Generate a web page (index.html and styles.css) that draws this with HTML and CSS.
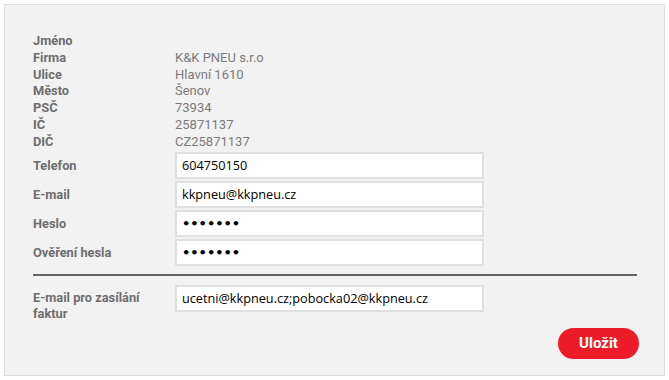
FILE: index.html
```html
<!DOCTYPE html>
<html lang="cs">
<head>
<meta charset="utf-8">
<link rel="stylesheet" href="styles.css">
</head>
<body>
<div class="panel">
  <div class="info">
    <div class="lbl">Jméno</div><div class="val"></div>
    <div class="lbl">Firma</div><div class="val">K&amp;K PNEU s.r.o</div>
    <div class="lbl">Ulice</div><div class="val">Hlavní 1610</div>
    <div class="lbl">Město</div><div class="val">Šenov</div>
    <div class="lbl">PSČ</div><div class="val">73934</div>
    <div class="lbl">IČ</div><div class="val">25871137</div>
    <div class="lbl">DIČ</div><div class="val">CZ25871137</div>
  </div>
  <div class="fields">
    <div class="lbl">Telefon</div><input class="inp" type="text" value="604750150">
    <div class="lbl">E-mail</div><input class="inp" type="text" value="kkpneu@kkpneu.cz">
    <div class="lbl">Heslo</div><input class="inp" type="password" value="1234567">
    <div class="lbl">Ověření hesla</div><input class="inp" type="password" value="1234567">
  </div>
  <hr class="sep">
  <div class="fields invoice">
    <div class="lbl lbl-top">E-mail pro zasílání faktur</div><input class="inp" type="text" value="ucetni@kkpneu.cz;pobocka02@kkpneu.cz">
  </div>
  <div class="actions">
    <button class="btn">Uložit</button>
  </div>
</div>
</body>
</html>
```
FILE: styles.css
```css
html, body {
  margin: 0;
  padding: 0;
  background: #fff;
}
body {
  font-family: Roboto, "Liberation Sans", Arial, sans-serif;
}
.panel {
  margin: 4px 0 0 4px;
  width: 661px;
  height: 372px;
  box-sizing: border-box;
  background: #f2f2f2;
  border: 1px solid #dedede;
  padding: 28px 27px 0 28px;
}
.info {
  display: grid;
  grid-template-columns: 142px 1fr;
  font-size: 13px;
  line-height: 16.8px;
}
.lbl {
  font-weight: 700;
  color: #6e6e6e;
  font-size: 12.8px;
}
.val {
  color: #7b7b7b;
  min-height: 16.8px;
}
.fields {
  display: grid;
  grid-template-columns: 142px 309px;
  row-gap: 2px;
  align-items: center;
  margin-top: 1px;
}
.inp {
  box-sizing: border-box;
  height: 27px;
  width: 309px;
  margin: 0;
  border: 2px solid #e0e0e0;
  background: #fff;
  padding: 0 5px;
  font-family: "Open Sans", "DejaVu Sans", sans-serif;
  font-size: 12.7px;
  color: #000;
  outline: none;
}
.inp[type="password"] {
  font-family: "DejaVu Sans", sans-serif;
  font-size: 13px;
  font-weight: 700;
}
.sep {
  margin: 8px 0 9px 0;
  border: 0;
  height: 2px;
  background: #666;
  width: 604px;
}
.invoice {
  margin-top: 0;
  align-items: start;
}
.lbl-top {
  line-height: 16px;
  padding-top: 5px;
  padding-right: 10px;
}
.actions {
  display: flex;
  justify-content: flex-end;
  margin-top: 6px;
  margin-right: -2px;
}
.btn {
  width: 81px;
  height: 31px;
  border: 0;
  border-radius: 16px;
  background: #ee1c2a;
  color: #fff;
  font-family: Roboto, "Liberation Sans", Arial, sans-serif;
  font-weight: 700;
  font-size: 15px;
  padding: 0;
}
```
